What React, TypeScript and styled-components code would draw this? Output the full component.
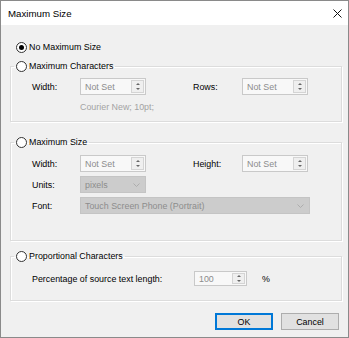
import React from 'react';
import styled, { createGlobalStyle } from 'styled-components';

const GlobalStyle = createGlobalStyle`
  html, body {
    margin: 0;
    padding: 0;
    background: #fff;
  }
  body {
    font-family: "Liberation Sans", Arial, sans-serif;
  }
`;

const Window = styled.div`
  box-sizing: border-box;
  width: 349px;
  height: 338px;
  border: 1px solid #8a8a8a;
  background: #f0f0f0;
  display: flex;
  flex-direction: column;
  font-family: "Liberation Sans", Arial, sans-serif;
  font-size: 8.9px;
  color: #000;
`;

const TitleBar = styled.div`
  height: 24px;
  flex: none;
  background: #fff;
  display: flex;
  align-items: center;
  justify-content: space-between;
  padding: 0 6px 0 7px;
`;

const Title = styled.span`
  font-size: 9.7px;
`;

const Body = styled.div`
  display: flex;
  flex-direction: column;
  padding: 16px 6px 0 9px;
`;

const RadioRow = styled.label`
  display: flex;
  align-items: center;
  gap: 2px;
  height: 13px;
  line-height: 13px;
  padding-left: 6px;
`;

const RadioDot = styled.span<{ $checked?: boolean }>`
  box-sizing: border-box;
  width: 11px;
  height: 11px;
  border-radius: 50%;
  border: 1px solid #333;
  background: #fff;
  display: flex;
  align-items: center;
  justify-content: center;
  &::after {
    content: '';
    width: 5px;
    height: 5px;
    border-radius: 50%;
    background: ${(p) => (p.$checked ? '#000' : 'transparent')};
  }
`;

const Group = styled.fieldset<{ $top: number }>`
  margin: ${(p) => p.$top}px 0 0 0;
  padding: 0;
  min-width: 0;
  border: 1px solid #dcdcdc;
  box-shadow: 1px 1px 0 #fff, inset 1px 1px 0 #fff;
`;

const Legend = styled.legend`
  margin-left: 3px;
  padding: 0 2px;
  line-height: 13px;
  height: 13px;
  display: flex;
  align-items: center;
  gap: 2px;
`;

const GroupContent = styled.div<{ $pt: number; $pb: number }>`
  padding: ${(p) => p.$pt}px 0 ${(p) => p.$pb}px 21px;
`;

const FieldGrid = styled.div`
  display: grid;
  grid-template-columns: 48px 66px 47px 49px 66px;
  grid-auto-rows: 17px;
  row-gap: 4px;
  align-items: center;
`;

const Label = styled.span``;

const Note = styled.div`
  margin: 7px 0 0 48px;
  line-height: 11px;
  color: #a3a3a3;
`;

const SpinBox = styled.div<{ $w: number; $h: number }>`
  box-sizing: border-box;
  width: ${(p) => p.$w}px;
  height: ${(p) => p.$h}px;
  border: 1px solid #c9c9c9;
  background: #f8f8f8;
  display: flex;
  align-items: stretch;
`;

const SpinText = styled.span`
  flex: 1;
  padding-left: 4px;
  display: flex;
  align-items: center;
  color: #8c8c8c;
`;

const SpinButtons = styled.div`
  box-sizing: border-box;
  width: 13px;
  margin: 1px;
  border: 1px solid #d4d4d4;
  background: #efefef;
  display: flex;
  flex-direction: column;
`;

const SpinHalf = styled.span<{ $down?: boolean }>`
  flex: 1;
  display: flex;
  align-items: center;
  justify-content: center;
  &::after {
    content: '';
    border-left: 2px solid transparent;
    border-right: 2px solid transparent;
    ${(p) =>
      p.$down ? 'border-top: 2px solid #666;' : 'border-bottom: 2px solid #666;'}
  }
`;

const Dropdown = styled.div<{ $w: number; $span?: number }>`
  box-sizing: border-box;
  width: ${(p) => p.$w}px;
  height: 17px;
  grid-column: ${(p) => (p.$span ? `span ${p.$span}` : 'auto')};
  border: 1px solid #c4c4c4;
  background: #cccccc;
  color: #8d8d8d;
  display: flex;
  align-items: center;
  justify-content: space-between;
  padding: 0 5px 0 4px;
`;

const PercentRow = styled.div`
  display: flex;
  align-items: center;
  height: 15px;
`;

const PercentLabel = styled.span`
  width: 162px;
`;

const Unit = styled.span`
  margin-left: 15px;
`;

const ButtonRow = styled.div`
  display: flex;
  justify-content: flex-end;
  gap: 8px;
  margin: 12px 3px 0 0;
`;

const Button = styled.button<{ $primary?: boolean }>`
  box-sizing: border-box;
  width: 58px;
  height: 17px;
  padding: 0;
  font-family: inherit;
  font-size: 8.9px;
  color: #000;
  background: #e1e1e1;
  border: 1px solid ${(p) => (p.$primary ? '#0078d7' : '#adadad')};
  box-shadow: ${(p) => (p.$primary ? 'inset 0 0 0 1px #0078d7' : 'none')};
`;

const Spin = ({ value, w, h = 17 }: { value: string; w: number; h?: number }) => (
  <SpinBox $w={w} $h={h}>
    <SpinText>{value}</SpinText>
    <SpinButtons>
      <SpinHalf />
      <SpinHalf $down />
    </SpinButtons>
  </SpinBox>
);

const Chevron = () => (
  <svg width="7" height="4" viewBox="0 0 7 4">
    <polyline points="0.5,0.5 3.5,3.5 6.5,0.5" fill="none" stroke="#adadad" strokeWidth="1" />
  </svg>
);

const CloseIcon = () => (
  <svg width="9" height="9" viewBox="0 0 9 9">
    <path d="M0.5 0.5 L8.5 8.5 M8.5 0.5 L0.5 8.5" stroke="#111" strokeWidth="1" />
  </svg>
);

export default function App() {
  return (
    <>
      <GlobalStyle />
      <Window>
        <TitleBar>
          <Title>Maximum Size</Title>
          <CloseIcon />
        </TitleBar>
        <Body>
          <RadioRow>
            <RadioDot $checked />
            No Maximum Size
          </RadioRow>

          <Group $top={6}>
            <Legend>
              <RadioDot />
              Maximum Characters
            </Legend>
            <GroupContent $pt={5} $pb={8}>
              <FieldGrid>
                <Label>Width:</Label>
                <Spin value="Not Set" w={66} />
                <span />
                <Label>Rows:</Label>
                <Spin value="Not Set" w={66} />
              </FieldGrid>
              <Note>Courier New; 10pt;</Note>
            </GroupContent>
          </Group>

          <Group $top={14}>
            <Legend>
              <RadioDot />
              Maximum Size
            </Legend>
            <GroupContent $pt={6} $pb={26}>
              <FieldGrid>
                <Label>Width:</Label>
                <Spin value="Not Set" w={66} />
                <span />
                <Label>Height:</Label>
                <Spin value="Not Set" w={66} />
                <Label>Units:</Label>
                <Dropdown $w={66} $span={4}>
                  pixels
                  <Chevron />
                </Dropdown>
                <Label>Font:</Label>
                <Dropdown $w={230} $span={4}>
                  Touch Screen Phone (Portrait)
                  <Chevron />
                </Dropdown>
              </FieldGrid>
            </GroupContent>
          </Group>

          <Group $top={9}>
            <Legend>
              <RadioDot />
              Proportional Characters
            </Legend>
            <GroupContent $pt={8} $pb={14}>
              <PercentRow>
                <PercentLabel>Percentage of source text length:</PercentLabel>
                <Spin value="100" w={53} h={15} />
                <Unit>%</Unit>
              </PercentRow>
            </GroupContent>
          </Group>

          <ButtonRow>
            <Button $primary>OK</Button>
            <Button>Cancel</Button>
          </ButtonRow>
        </Body>
      </Window>
    </>
  );
}
